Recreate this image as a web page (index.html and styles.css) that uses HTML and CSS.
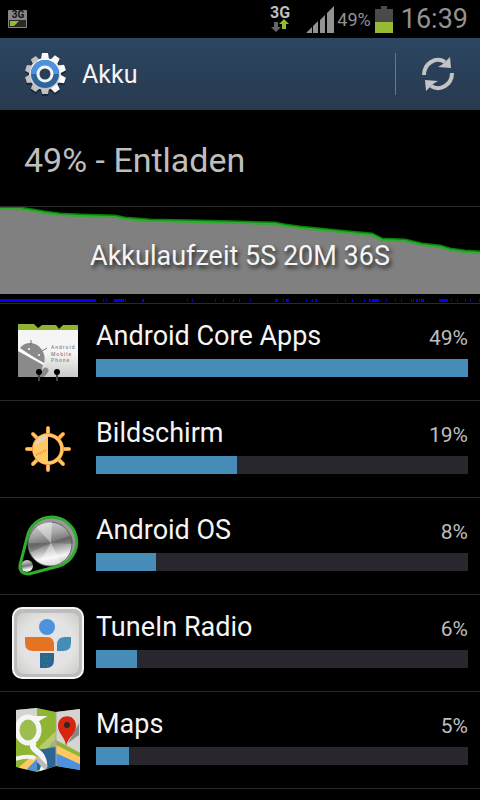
FILE: index.html
```html
<!DOCTYPE html>
<html lang="de">
<head>
    <meta charset="utf-8">
    <title>Akku</title>
    <meta name="viewport" content="width=device-width, initial-scale=1.0">
    <link rel="stylesheet" href="styles.css">
</head>
<body>
    <div class="status-bar">
        <svg class="status-notification" width="20" height="20" viewBox="0 0 20 20">
            <rect x="0" y="1" width="19" height="18" rx="1" fill="#858585"/>
            <rect x="1" y="11" width="17" height="7" fill="#292929"/>
            <path d="M2 12h9l-5 5H2z" fill="#97b934"/>
            <text x="10" y="9" text-anchor="middle" font-size="10" font-weight="700" fill="#111">3G</text>
        </svg>
        <svg class="status-data" width="22" height="26" viewBox="0 0 22 26">
            <text x="11" y="12" text-anchor="middle" font-size="16" font-weight="700" fill="#bebebe">3G</text>
            <path d="M5 16h4v5h3l-5 5-5-5h3z" fill="#666"/>
            <path d="M13 23v-5h-3l5-5 5 5h-3v5z" fill="#97b934"/>
        </svg>
        <svg class="status-signal" width="28" height="27" viewBox="0 0 28 27">
            <path d="M0 27l6-6v6zM7 27v-7l5-5v12zM14 27V14l5-5v18zM21 27V7l7-7v27z" fill="#929292"/>
        </svg>
        <span class="status-percent">49%</span>
        <svg class="status-battery" width="18" height="27" viewBox="0 0 18 27">
            <path d="M6 0h6v3h6v24H0V3h6z" fill="#4a4a4a"/>
            <path d="M0 16h18v11H0z" fill="#97b934"/>
        </svg>
        <time class="status-time">16:39</time>
    </div>

    <header class="action-bar">
        <svg class="action-icon" width="42" height="44" viewBox="-21 -22 42 44">
            <defs>
                <linearGradient id="gear" x1="0" y1="0" x2="0" y2="1">
                    <stop offset="0" stop-color="#fff"/>
                    <stop offset="1" stop-color="#bdbdbd"/>
                </linearGradient>
                <g id="gear-shape">
                    <circle r="16"/>
                    <path id="teeth" d="M-4-15l1-6h6l1 6zM-4 15l1 5h6l1-5z"/>
                    <use href="#teeth" transform="rotate(36)"/>
                    <use href="#teeth" transform="rotate(72)"/>
                    <use href="#teeth" transform="rotate(108)"/>
                    <use href="#teeth" transform="rotate(144)"/>
                </g>
            </defs>
            <use href="#gear-shape" y="2" fill="#172536"/>
            <use href="#gear-shape" fill="url(#gear)"/>
            <circle r="14" fill="#2c659a"/>
            <path d="M-14 0a14 14 0 0 1 28 0z" fill="#4e91df"/>
            <circle r="7" fill="#2b3e54" stroke="#f4f4f4" stroke-width="3"/>
        </svg>
        <h1 class="action-title">Akku</h1>
        <button class="refresh-button" type="button" aria-label="Aktualisieren">
            <svg width="34" height="36" viewBox="0 0 34 36">
                <g id="arrow">
                    <path d="M3 19A14 15 0 0 1 24 6" fill="none" stroke="#c4c4c4" stroke-width="4"/>
                    <path d="M17 11l5-3 7-7 1 11z" fill="#c4c4c4"/>
                </g>
                <use href="#arrow" transform="rotate(180 17 18)"/>
            </svg>
        </button>
    </header>

    <main>
        <h2 class="battery-state">49% - Entladen</h2>

        <div class="history">
            <svg class="history-chart" viewBox="0 0 480 96" preserveAspectRatio="none">
                <path d="M0 1H20L33 3 45 5 60 7 80 8 115 9 125 11 150 13 200 14 240 15 275 16 285 18 300 20 330 23 350 25 372 27 382 32 405 33 422 37 440 39 450 42 465 44 480 45V87H0z" fill="#808080"/>
                <path d="M0 1H20L33 3 45 5 60 7 80 8 115 9 125 11 150 13 200 14 240 15 275 16 285 18 300 20 330 23 350 25 372 27 382 32 405 33 422 37 440 39 450 42 465 44 480 45" fill="none" stroke="#0b7e0b" stroke-width="3"/>
                <path d="M0 2H20L33 4 45 6 60 8 80 9 115 10 125 12 150 14 200 15 240 16 275 17 285 19 300 21 330 24 350 26 372 28 382 33 405 34 422 38 440 40 450 43 465 45 480 46" fill="none" stroke="#30ad30" stroke-width="2"/>
                <path d="M0 92h96v3H0zM103 92h1v3h-1zM106 92h1v3h-1zM114 92h10v3h-10zM125 92h1v3h-1zM142 92h2v3h-2zM187 92h1v3h-1zM192 92h1v3h-1zM215 92h1v3h-1zM223 92h1v3h-1zM233 92h1v3h-1zM239 92h1v3h-1zM250 92h1v3h-1zM275 92h3v3h-3zM283 92h1v3h-1zM286 92h3v3h-3zM306 92h1v3h-1zM312 92h1v3h-1zM315 92h2v3h-2zM337 92h1v3h-1zM345 92h1v3h-1zM352 92h1v3h-1zM364 92h1v3h-1zM369 92h2v3h-2zM372 92h7v3h-7zM386 92h1v3h-1zM395 92h1v3h-1zM401 92h1v3h-1zM411 92h1v3h-1zM413 92h1v3h-1zM416 92h2v3h-2zM419 92h1v3h-1zM421 92h3v3h-3zM439 92h9v3h-9zM451 92h1v3h-1zM457 92h1v3h-1zM465 92h1v3h-1zM470 92h1v3h-1zM479 92h1v3h-1z" fill="#00f"/>
            </svg>
            <span class="history-label">Akkulaufzeit 5S 20M 36S</span>
        </div>

        <ul class="usage-list">
            <li class="usage-item">
                <svg class="usage-icon" width="72" height="72" viewBox="0 0 72 72">
                    <defs>
                        <linearGradient id="card" x1="0" y1="0" x2="0" y2="1">
                            <stop offset="0.5" stop-color="#f5f5f5"/>
                            <stop offset="1" stop-color="#c9c9c7"/>
                        </linearGradient>
                    </defs>
                    <path d="M6 20V8h16l4 4 4-3h14l3 4 4-4h15v10z" fill="#8db32f"/>
                    <path d="M6 14h60v47H6z" fill="url(#card)"/>
                    <path d="M8 32c6-8 17-6 22 2 3 5 3 9 2 14z" fill="#8a8a8a"/>
                    <path d="M6 61V35l25 14-2 7q4-7 7-3c2 2-2 6-4 8z" fill="#8a8a8a"/>
                    <path d="M7 34l25 14" stroke="#fff" stroke-width="2"/>
                    <path d="M19 29v-5M30 35l5-3" stroke="#777"/>
                    <circle cx="17" cy="33" r="1" fill="#fff"/>
                    <circle cx="27" cy="39" r="1" fill="#fff"/>
                    <g font-size="5" font-weight="500" letter-spacing="1" fill="#888">
                        <text x="39" y="33">Android</text>
                        <text x="39" y="40">Mobile</text>
                        <text x="39" y="46">Phone</text>
                    </g>
                    <path d="M27 57v8M45 57v8" stroke="#444" stroke-width="2"/>
                    <circle cx="27" cy="56" r="3"/>
                    <circle cx="45" cy="56" r="3"/>
                </svg>
                <div class="usage-body">
                    <div class="usage-text">
                        <span class="usage-name">Android Core Apps</span>
                        <span class="usage-percent">49%</span>
                    </div>
                    <div class="usage-bar"><div class="usage-fill" style="width: 100%"></div></div>
                </div>
            </li>
            <li class="usage-item">
                <svg class="usage-icon" width="72" height="72" viewBox="0 0 72 72">
                    <path d="M36 15v7M36 50v7M15 36h7M50 36h7M21 21l5 5M46 46l5 5M21 51l5-5M46 26l5-5" stroke="#e07325" stroke-width="4" stroke-linecap="round"/>
                    <path d="M36 15v7M36 50v7M15 36h7M50 36h7M21 21l5 5M46 46l5 5M21 51l5-5M46 26l5-5" stroke="#ffc864" stroke-width="3" stroke-linecap="round"/>
                    <circle cx="36" cy="36" r="14" fill="#000" stroke="#e07325" stroke-width="4"/>
                    <circle cx="36" cy="36" r="14" fill="none" stroke="#ffc864" stroke-width="3"/>
                    <path d="M36 22a14 14 0 0 0 0 28z" fill="#ffc864"/>
                    <path d="M23 33c0-6 6-11 12-11-2 6-7 7-12 11z" fill="#dfd5bd"/>
                    <path d="M24 42l11-5" stroke="#e88b35" stroke-width="2" stroke-dasharray="1 1"/>
                </svg>
                <div class="usage-body">
                    <div class="usage-text">
                        <span class="usage-name">Bildschirm</span>
                        <span class="usage-percent">19%</span>
                    </div>
                    <div class="usage-bar"><div class="usage-fill" style="width: 38%"></div></div>
                </div>
            </li>
            <li class="usage-item">
                <svg class="usage-icon" width="72" height="72" viewBox="0 0 72 72">
                    <defs>
                        <linearGradient id="steel" x1="0.4" y1="0" x2="0.6" y2="1">
                            <stop offset="0" stop-color="#cfcfcf"/>
                            <stop offset="0.25" stop-color="#a8a8a8"/>
                            <stop offset="0.46" stop-color="#777"/>
                            <stop offset="0.6" stop-color="#aaa"/>
                            <stop offset="0.8" stop-color="#f5f5f5"/>
                            <stop offset="1" stop-color="#bbb"/>
                        </linearGradient>
                    </defs>
                    <circle cx="40" cy="32" r="24" fill="#999"/>
                    <circle cx="38" cy="34" r="22" fill="url(#steel)" stroke="#666"/>
                    <path d="M39 33L24 17q8-6 16-5zM39 33l-12 20q11 5 22 0z" fill="#fff" opacity="0.4"/>
                    <path d="M39 33l20-8q3 5 2 9zM39 33H17q0 6 2 9z" fill="#333" opacity="0.25"/>
                    <circle cx="15" cy="56" r="6" fill="url(#steel)"/>
                    <path d="M15 28A25 25 0 1 1 47 56L17 64Q7 64 8 55z" fill="none" stroke="#2fae2f" stroke-width="3"/>
                </svg>
                <div class="usage-body">
                    <div class="usage-text">
                        <span class="usage-name">Android OS</span>
                        <span class="usage-percent">8%</span>
                    </div>
                    <div class="usage-bar"><div class="usage-fill" style="width: 16%"></div></div>
                </div>
            </li>
            <li class="usage-item">
                <svg class="usage-icon" width="72" height="72" viewBox="0 0 72 72">
                    <defs>
                        <radialGradient id="tile" r="0.7">
                            <stop offset="0.6" stop-color="#e3e3e3"/>
                            <stop offset="1" stop-color="#cfccc4"/>
                        </radialGradient>
                    </defs>
                    <rect x="1" y="1" width="70" height="70" rx="9" fill="#bdbdbd" stroke="#f7f7f7" stroke-width="2"/>
                    <rect x="5" y="6" width="62" height="61" rx="7" fill="url(#tile)"/>
                    <circle cx="35" cy="20" r="8" fill="#4e91df"/>
                    <path d="M13 30h22q7 0 7 8v6H21q-8 0-8-8z" fill="#e57324"/>
                    <path d="M45 44v-6q0-8 8-8h6v6q0 8-8 8z" fill="#468cb8"/>
                    <path d="M28 46h14v7q0 8-8 8h-6z" fill="#2c6594"/>
                    <path d="M32 50h7M31 54h8M32 58h5" stroke="#2fa52f" stroke-dasharray="1 2"/>
                </svg>
                <div class="usage-body">
                    <div class="usage-text">
                        <span class="usage-name">TuneIn Radio</span>
                        <span class="usage-percent">6%</span>
                    </div>
                    <div class="usage-bar"><div class="usage-fill" style="width: 11%"></div></div>
                </div>
            </li>
            <li class="usage-item">
                <svg class="usage-icon" width="72" height="72" viewBox="0 0 72 72">
                    <defs>
                        <clipPath id="map">
                            <path d="M4 6l21-2 19 4 24-3v61l-24-4-19 6-21-5z"/>
                        </clipPath>
                    </defs>
                    <g clip-path="url(#map)">
                        <path d="M0 0h72v72H0z" fill="#8fb532"/>
                        <path d="M4 0h21v12L4 18zM44 0h28v51L44 36z" fill="#d6d4d0"/>
                        <path d="M27 43l17-16v10L31 48z" fill="#b9cc6b"/>
                        <path d="M38 40l6-5v9z" fill="#aaa"/>
                        <path d="M25 46l19-3v23H25z" fill="#2c6594"/>
                        <path d="M44 50l28 10v10L44 62z" fill="#4e91df"/>
                        <path d="M44 41l28 14v7L44 49z" fill="#ffc864"/>
                        <path d="M6 64l15-13 6 3-14 14z" fill="#ffc864"/>
                        <path d="M14 66l11-11v12z" fill="#4e91df"/>
                        <ellipse cx="16" cy="26" rx="11" ry="13" fill="#9dbd50" stroke="#f5f5f5" stroke-width="5"/>
                        <path d="M12 13h20l-5 3h-7" fill="#f5f5f5" stroke="#f5f5f5" stroke-width="2"/>
                        <path d="M22 38c-4 7 3 8 7 13 5 8 3 12 1 17" fill="none" stroke="#f5f5f5" stroke-width="6"/>
                        <path d="M3 55q12-4 20-1" fill="none" stroke="#f5f5f5" stroke-width="4"/>
                        <path d="M25 51l11 11-3 4-8-8z" fill="#bbb"/>
                        <path d="M44 7v55" stroke="#a5a5a5"/>
                        <path d="M56 39l11-20v12z" fill="#888"/>
                    </g>
                    <path d="M54 42c-1-10-8-12-8-20 0-13 18-13 18 0 0 8-8 11-10 20z" fill="#d7260f"/>
                    <circle cx="55" cy="21" r="3" fill="#292929"/>
                </svg>
                <div class="usage-body">
                    <div class="usage-text">
                        <span class="usage-name">Maps</span>
                        <span class="usage-percent">5%</span>
                    </div>
                    <div class="usage-bar"><div class="usage-fill" style="width: 9%"></div></div>
                </div>
            </li>
        </ul>
    </main>
</body>
</html>
```

FILE: styles.css
```css
body {
    margin: 0;
    font-family: Roboto, sans-serif;
    background: #000;
    color: #f5f5f5;
}

.status-bar {
    display: flex;
    align-items: center;
    height: 38px;
    padding: 0 12px 0 8px;
    color: #929292;
}

.status-data {
    margin-left: auto;
    margin-right: 15px;
    overflow: visible;
}

.status-percent {
    margin: 0 4px 0 3px;
    font-size: 18px;
}

.status-time {
    margin-left: 8px;
    font-size: 27px;
}

.action-bar {
    display: flex;
    align-items: center;
    height: 72px;
    padding-left: 24px;
    background: linear-gradient(#2d4662, #27394f);
}

.action-title {
    flex: 1;
    margin: 0 0 0 16px;
    font-size: 25px;
    font-weight: 400;
}

.refresh-button {
    display: flex;
    align-items: center;
    justify-content: center;
    width: 85px;
    height: 42px;
    padding: 0;
    border: 0;
    border-left: 1px solid #66788b;
    background: none;
    cursor: pointer;
}

.battery-state {
    margin: 0;
    padding: 4px 24px 0;
    border-bottom: 1px solid #292929;
    font-size: 34px;
    font-weight: 400;
    line-height: 92px;
    color: #bebebe;
}

.history {
    position: relative;
    border-bottom: 1px solid #292929;
}

.history-chart {
    display: block;
    width: 100%;
    height: 96px;
}

.history-label {
    position: absolute;
    top: 33px;
    left: 0;
    right: 0;
    font-size: 27px;
    line-height: 32px;
    text-align: center;
    text-shadow: 2px 3px 4px #222;
}

.usage-list {
    margin: 0;
    padding: 0;
    list-style: none;
}

.usage-item {
    display: flex;
    gap: 12px;
    padding: 12px;
    border-bottom: 1px solid #292929;
}

.usage-icon {
    flex: none;
}

.usage-body {
    flex: 1;
}

.usage-text {
    display: flex;
    align-items: baseline;
    justify-content: space-between;
    height: 43px;
    line-height: 40px;
}

.usage-name {
    font-size: 27px;
}

.usage-percent {
    font-size: 21px;
    color: #bebebe;
}

.usage-bar {
    height: 18px;
    background: #29262d;
}

.usage-fill {
    height: 100%;
    background: #468cb8;
}
```
